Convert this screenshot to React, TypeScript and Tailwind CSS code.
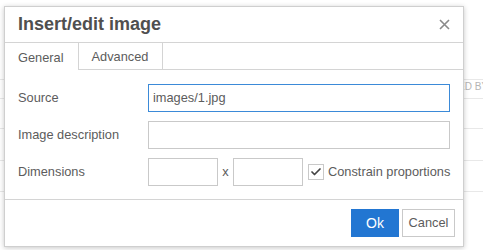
import { Check } from "lucide-react";

const font = "font-['Liberation_Sans',Arial,sans-serif]";

function Field({ label, children }: { label: string; children: React.ReactNode }) {
  return (
    <div className="flex h-[28px] items-center">
      <label className="w-[130px] shrink-0 text-[12.8px] text-[#5c5c5c]">{label}</label>
      <div className="flex min-w-0 flex-1 items-center">{children}</div>
    </div>
  );
}

export default function App() {
  return (
    <div className={`relative h-[250px] w-[483px] overflow-hidden bg-white ${font}`}>
      {/* page behind the dialog */}
      <div className="flex flex-col">
        <div className="h-[80px] border-b border-[#e8e8e8]" />
        <div className="h-[19px] whitespace-nowrap border-b border-[#e8e8e8] pl-[437px] pt-[2px] text-[10px] leading-none text-[#b5b5b5] uppercase">
          Added by
        </div>
        <div className="h-[30px] border-b border-[#e8e8e8]" />
        <div className="h-[32px] border-b border-[#e8e8e8]" />
        <div className="h-[31px] border-b border-[#e8e8e8]" />
      </div>

      {/* dialog */}
      <div className="absolute left-[4px] top-[6px] flex w-[460px] flex-col border border-[#cfcfcf] bg-white shadow-[0_1px_5px_rgba(0,0,0,0.22)]">
        <div className="flex h-[36px] items-center justify-between border-b border-[#d4d4d4] pl-[13px] pr-[11px]">
          <h1 className="text-[18px] font-bold text-[#4f4f4f]">Insert/edit image</h1>
          <button type="button" className="grid size-[16px] place-items-center">
            <svg width="11" height="11" viewBox="0 0 11 11">
              <path d="M1 1L10 10M10 1L1 10" stroke="#8a8a8a" strokeWidth="1.6" />
            </svg>
          </button>
        </div>

        <div className="flex h-[27px] text-[12.8px] text-[#5c5c5c]">
          <div className="flex items-center border-r border-[#d4d4d4] pl-[13px] pr-[14px] pt-[2px]">General</div>
          <div className="flex items-center border-r border-b border-[#d4d4d4] pl-[13px] pr-[14px] pt-[2px]">Advanced</div>
          <div className="flex-1 border-b border-[#d4d4d4]" />
        </div>

        <div className="flex flex-col gap-[9px] border-b border-[#d4d4d4] pb-[13px] pl-[13px] pr-[13px] pt-[14px]">
          <Field label="Source">
            <div className="flex h-[28px] flex-1 items-center border border-[#3b8ad8] px-[4px] text-[12.8px] text-[#5c5c5c]">
              images/1.jpg
            </div>
          </Field>
          <Field label="Image description">
            <div className="h-[28px] flex-1 border border-[#c9c9c9]" />
          </Field>
          <Field label="Dimensions">
            <div className="h-[28px] w-[70px] shrink-0 border border-[#c9c9c9]" />
            <span className="w-[15px] shrink-0 text-center text-[12.8px] text-[#5c5c5c]">x</span>
            <div className="h-[28px] w-[70px] shrink-0 border border-[#c9c9c9]" />
            <div className="ml-[5px] grid size-[16px] shrink-0 place-items-center border border-[#c9c9c9]">
              <Check size={12} strokeWidth={3.5} className="text-[#444]" />
            </div>
            <span className="ml-[4px] whitespace-nowrap text-[12.8px] text-[#5c5c5c]">Constrain proportions</span>
          </Field>
        </div>

        <div className="flex h-[46px] items-center justify-end gap-[3px] pr-[8px]">
          <button type="button" className="h-[28px] w-[48px] bg-[#2276d2] text-[14px] text-white">
            Ok
          </button>
          <button
            type="button"
            className="h-[28px] w-[53px] border border-[#c9c9c9] bg-white text-[12.8px] text-[#5c5c5c]"
          >
            Cancel
          </button>
        </div>
      </div>
    </div>
  );
}
